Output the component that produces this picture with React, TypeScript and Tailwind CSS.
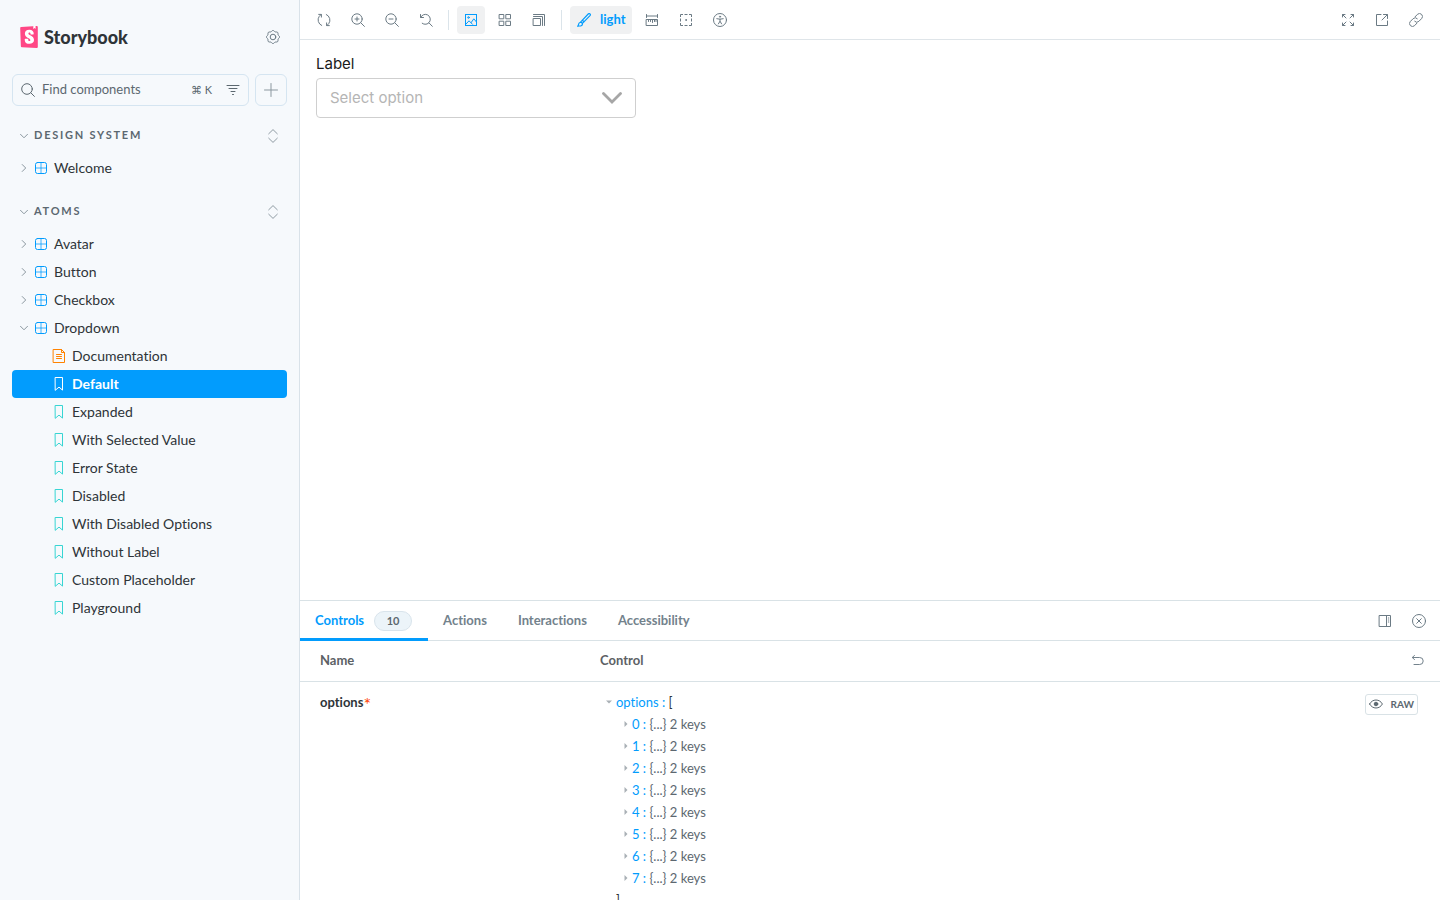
import React, { useState } from "react";

type IconProps = { className?: string };

function Glyph({ className = "size-3.5", children }: { className?: string; children: React.ReactNode }) {
  return (
    <svg viewBox="0 0 14 14" fill="none" stroke="currentColor" strokeLinecap="round" className={`shrink-0 ${className}`} aria-hidden="true">
      {children}
    </svg>
  );
}

const Logo = () => (
  <svg viewBox="0 0 32 40" className="h-[22px] w-[18px] shrink-0" aria-hidden="true">
    <path fill="#FF4785" d="M1.2 36.9 0 3.9c0-1.1.8-2 1.9-2.1l28-1.8a2 2 0 0 1 2.1 1.9V38a2 2 0 0 1-2 2L3.3 38.8a2 2 0 0 1-2.1-1.9z" />
    <path fill="#fff" d="M23.7 5 24 .2l3.9-.3.1 4.8a.3.3 0 0 1-.5.2L26 3.8l-1.7 1.4a.3.3 0 0 1-.5-.3zm-5 10c0 .9 5.3.5 6 0 0-5.400-2.800-8.200-8-8.200-5.300 0-8.200 2.800-8.200 7.100 0 7.400 10 7.600 10 11.600 0 1.200-.5 1.900-1.800 1.900-1.600 0-2.200-.9-2.100-3.600 0-.6-6.100-.8-6.300 0-.5 6.700 3.700 8.600 8.500 8.600 4.600 0 8.300-2.500 8.300-7 0-7.900-10.200-7.700-10.200-11.600 0-1.600 1.200-1.800 2-1.800.6 0 2 0 1.800 3z" />
  </svg>
);

// Outline of an eight-lobed gear, sampled around the centre.
const gearPoints = Array.from({ length: 64 }, (_, i) => {
  const angle = (i / 64) * Math.PI * 2;
  const radius = 6.05 + 0.5 * Math.cos(8 * angle);
  return `${(7 + radius * Math.cos(angle)).toFixed(2)},${(7 + radius * Math.sin(angle)).toFixed(2)}`;
}).join(" ");

const CogIcon = () => (
  <Glyph>
    <circle cx="7" cy="7" r="2.8" />
    <polygon points={gearPoints} strokeLinejoin="round" />
  </Glyph>
);
const SearchIcon = () => (
  <Glyph>
    <circle cx="6" cy="6" r="5.3" />
    <path d="m9.9 9.9 3.500 3.500" />
  </Glyph>
);
const FilterIcon = () => (
  <Glyph>
    <path d="M1 2.500h12M3 5.500h8M5 8.500h4M6.500 11.500h1" />
  </Glyph>
);
const PlusIcon = () => (
  <Glyph>
    <path d="M7 .5v13M.5 7h13" />
  </Glyph>
);
const ExpandAllIcon = () => (
  <Glyph>
    <path strokeLinejoin="round" d="M2.700 4.800 7 .6l4.300 4.200M2.700 9.200 7 13.400l4.300-4.200" />
  </Glyph>
);
const Chevron = ({ open }: { open: boolean }) => (
  <svg viewBox="0 0 8 8" fill="none" stroke="currentColor" strokeLinecap="round" strokeLinejoin="round" className="size-2 shrink-0 text-[#8b979f]" aria-hidden="true">
    <path d={open ? "M.5 2.300 4 5.800l3.500-3.500" : "M2.200.5 5.700 4 2.200 7.500"} />
  </svg>
);
const ComponentIcon = () => (
  <Glyph className="size-3.5 text-[#029cfd]">
    <rect x="1.5" y="1.5" width="11" height="11" rx="2" />
    <path d="M7 1.500v11M1.500 7h11" strokeOpacity=".75" />
  </Glyph>
);
const DocumentIcon = () => (
  <Glyph className="size-3.5 text-[#ff8300]">
    <path d="M1.500.5h8l3 3v10h-11z" />
    <path d="M9.500.5v3h3M4.500 5.500h5M4.500 7.500h5M4.500 9.500h5" />
  </Glyph>
);
const BookmarkIcon = ({ className }: IconProps) => (
  <Glyph className={`size-3.5 ${className}`}>
    <path d="M3.500.5h7v12.600L7 10.100l-3.500 3z" strokeLinejoin="round" />
  </Glyph>
);

const SyncIcon = () => (
  <Glyph>
    <path d="M4.700 12.500A6 6 0 0 1 2.300 3.300L4.200 1.400M1.700 1.400h2.700v2.700M9.300 1.500a6 6 0 0 1 2.400 9.200l-1.900 1.900M12.300 12.600H9.600V9.900" />
  </Glyph>
);
const ZoomInIcon = () => (
  <Glyph>
    <circle cx="6" cy="6" r="5.2" />
    <path d="m9.800 9.800 3.600 3.600M6 4v4M4 6h4" />
  </Glyph>
);
const ZoomOutIcon = () => (
  <Glyph>
    <circle cx="6" cy="6" r="5.2" />
    <path d="m9.800 9.800 3.600 3.600M4 6h4" />
  </Glyph>
);
const ZoomResetIcon = () => (
  <Glyph>
    <path d="M1.500 1.500v3h3M1.700 4.300A5 5 0 1 1 3.200 10.300M9.800 9.700l3.500 3.600" />
  </Glyph>
);
const PhotoIcon = () => (
  <Glyph>
    <rect x="1.5" y="1.5" width="11" height="11" />
    <circle cx="4.5" cy="4.5" r=".8" />
    <path d="m1.800 11.300 3.200-3.500 2 2 2.800-4 2.500 3M7 9.800l1.500 1.500" />
  </Glyph>
);
const GridIcon = () => (
  <Glyph>
    <path d="M1.500 1.500h4.300v4.300H1.500zM8.200 1.500h4.300v4.300H8.200zM1.500 8.200h4.300v4.300H1.500zM8.200 8.200h4.300v4.300H8.200z" />
  </Glyph>
);
const GrowIcon = () => (
  <Glyph>
    <path d="M1.500 5.500h7v7h-7zM1.500 3.500h9v9M1.500 1.500h11v11" />
  </Glyph>
);
const PaintBrushIcon = () => (
  <Glyph>
    <path strokeWidth="1.2" strokeLinejoin="round" d="M.7 13.300c.8-.7.7-1.900 1.300-3 .7-1.300 2.300-1.300 3-.4.800 1 .4 2.300-.8 2.800-1 .4-2.300.2-3.500.6zM3.300 9.300l7.900-8.300c.6-.6 1.300-.5 1.800-.1.500.5.500 1.200 0 1.800L5.200 10.600M5.300 7.200l1.700 1.600" />
  </Glyph>
);
const RulerIcon = () => (
  <Glyph>
    <path d="M1.500 1.500v3M12.500 1.500v3M1.500 3h11M1.500 6.500h11v6h-11zM3.500 6.500v2M5.500 6.500v2M7.500 6.500v3M9.500 6.500v2M11 6.500v2" />
  </Glyph>
);
const OutlineIcon = () => (
  <Glyph>
    <path d="M1.500 4V1.500H4M5.500 1.500h3M10 1.500h2.500V4M12.500 5.500v3M12.500 10v2.500H10M8.500 12.500h-3M4 12.500H1.500V10M1.500 8.500v-3" strokeLinecap="butt" />
    <circle cx="7" cy="7" r=".5" />
  </Glyph>
);
const AccessibilityIcon = () => (
  <Glyph>
    <circle cx="7" cy="7" r="6.5" />
    <circle cx="7" cy="3.7" r=".6" />
    <path strokeLinejoin="round" d="M3.800 5.700 7 6.200l3.200-.5M7 6.200v2M5.400 10.900 7 8.200l1.600 2.700" />
  </Glyph>
);
const FullscreenIcon = () => (
  <Glyph>
    <path d="M1.500 4V1.500H4M1.500 1.500 5 5M10 1.500h2.500V4M12.500 1.500 9 5M1.500 10v2.500H4M1.500 12.500 5 9M12.500 10v2.500H10M12.500 12.500 9 9" />
  </Glyph>
);
const ShareIcon = () => (
  <Glyph>
    <path strokeLinejoin="round" d="M6 1.500H1.500v11h11V8M8.500 1.500h4v4M12.300 1.700 7 7" />
  </Glyph>
);
const LinkIcon = () => (
  <Glyph>
    <path d="m6.200 3.700 2.200-2.300a2.900 2.900 0 0 1 4.200 4.200L9.900 8.300a2.900 2.900 0 0 1-4.200 0M7.800 10.300l-2.200 2.300a2.900 2.900 0 0 1-4.200-4.200l2.700-2.700a2.900 2.900 0 0 1 4.200 0" />
  </Glyph>
);
const SidebarRightIcon = () => (
  <Glyph>
    <path d="M1.500 1.500h11v11h-11zM8.500 1.500v11M10.300 4h.5M10.300 6h.5M10.300 8h.5" />
  </Glyph>
);
const CloseIcon = () => (
  <Glyph>
    <circle cx="7" cy="7" r="6.5" />
    <path d="m4.700 4.700 4.600 4.600M9.300 4.700 4.700 9.300" />
  </Glyph>
);
const UndoIcon = () => (
  <Glyph>
    <path d="M3.500 1.500 1.200 3.500l2.300 2M1.500 3.500h7.200a3.500 3.500 0 0 1 0 7H3" strokeLinejoin="round" />
  </Glyph>
);
const EyeIcon = () => (
  <Glyph>
    <path d="M.6 7C2 4.500 4.300 3 7 3s5 1.500 6.400 4C12 9.500 9.700 11 7 11S2 9.500.6 7z" />
    <circle cx="7" cy="7" r="1.8" fill="currentColor" />
  </Glyph>
);

function ToolButton({ label, active, children }: { label: string; active?: boolean; children: React.ReactNode }) {
  return (
    <button
      type="button"
      aria-label={label}
      className={`flex size-7 shrink-0 items-center justify-center rounded ${active ? "bg-[#f0f1f2] text-[#029cfd]" : "text-[#6b7a84]"}`}
    >
      {children}
    </button>
  );
}

const ToolDivider = () => <span className="mx-0.5 h-5 w-px bg-[#dbe4ea]" />;

function SectionHeading({ title }: { title: string }) {
  return (
    <div className="mb-1 flex h-[29px] items-center justify-between pr-[7px] pl-2 text-[#5c6870]">
      <button type="button" className="flex items-center gap-1.5 text-[11px] font-bold tracking-[0.16em] uppercase">
        <Chevron open />
        {title}
      </button>
      <button type="button" aria-label={`Expand ${title}`} className="text-[#8f9ba3]">
        <ExpandAllIcon />
      </button>
    </div>
  );
}

function ComponentRow({ name, open = false }: { name: string; open?: boolean }) {
  return (
    <button type="button" aria-expanded={open} className="flex h-7 w-full items-center gap-1.5 rounded px-2 text-left text-sm">
      <Chevron open={open} />
      <ComponentIcon />
      {name}
    </button>
  );
}

const stories = [
  "Default",
  "Expanded",
  "With Selected Value",
  "Error State",
  "Disabled",
  "With Disabled Options",
  "Without Label",
  "Custom Placeholder",
  "Playground",
];

function Sidebar() {
  return (
    <aside className="flex w-[300px] shrink-0 flex-col border-r border-[#d9e2e9] bg-[#f6f9fc] px-3 text-[#2e3438]">
      <header className="flex h-[74px] items-center justify-between pr-[7px] pl-2">
        <a href="#home" className="flex items-center gap-1.5 text-lg font-black">
          <Logo />
          Storybook
        </a>
        <button type="button" aria-label="Settings" className="text-[#6b7a84]">
          <CogIcon />
        </button>
      </header>
      <div className="mb-[15px] flex gap-1.5">
        <div className="flex h-8 min-w-0 flex-1 items-center rounded-md border border-[#d5e5f1] px-2 text-[#5c6870]">
          <SearchIcon />
          <input
            type="text"
            aria-label="Find components"
            placeholder="Find components"
            className="ml-[7px] min-w-0 flex-1 bg-transparent text-[13px] outline-none placeholder:text-[#5c6870]"
          />
          <kbd className="mr-3.5 font-[Lato,'DejaVu_Sans',sans-serif] text-[11px]">⌘ K</kbd>
          <button type="button" aria-label="Filter">
            <FilterIcon />
          </button>
        </div>
        <button type="button" aria-label="Create a new story" className="flex size-8 items-center justify-center rounded-md border border-[#d5e5f1] text-[#8b979f]">
          <PlusIcon />
        </button>
      </div>
      <section className="mb-[15px]">
        <SectionHeading title="Design System" />
        <ComponentRow name="Welcome" />
      </section>
      <section>
        <SectionHeading title="Atoms" />
        <ComponentRow name="Avatar" />
        <ComponentRow name="Button" />
        <ComponentRow name="Checkbox" />
        <ComponentRow name="Dropdown" open />
        <a href="#docs" className="flex h-7 items-center gap-1.5 rounded pl-10 text-sm">
          <DocumentIcon />
          Documentation
        </a>
        {stories.map((story, i) => (
          <a
            key={story}
            href={`#story-${i}`}
            className={`flex h-7 items-center gap-1.5 rounded pl-10 text-sm ${i === 0 ? "bg-[#029cfd] font-bold text-white" : ""}`}
          >
            <BookmarkIcon className={i === 0 ? "text-white" : "text-[#37d5d3]"} />
            {story}
          </a>
        ))}
      </section>
    </aside>
  );
}

function Toolbar() {
  return (
    <div className="flex h-10 shrink-0 items-center justify-between border-b border-[#dfe5e9] px-2.5">
      <div className="flex items-center gap-1.5">
        <ToolButton label="Reload story"><SyncIcon /></ToolButton>
        <ToolButton label="Zoom in"><ZoomInIcon /></ToolButton>
        <ToolButton label="Zoom out"><ZoomOutIcon /></ToolButton>
        <ToolButton label="Reset zoom"><ZoomResetIcon /></ToolButton>
        <ToolDivider />
        <ToolButton label="Change background" active><PhotoIcon /></ToolButton>
        <ToolButton label="Toggle grid"><GridIcon /></ToolButton>
        <ToolButton label="Change viewport"><GrowIcon /></ToolButton>
        <ToolDivider />
        <button type="button" className="flex h-7 items-center gap-[9px] rounded bg-[#f0f1f2] px-[7px] text-[13px] font-bold text-[#029cfd]">
          <PaintBrushIcon />
          light
        </button>
        <ToolButton label="Measure"><RulerIcon /></ToolButton>
        <ToolButton label="Outline"><OutlineIcon /></ToolButton>
        <ToolButton label="Vision simulator"><AccessibilityIcon /></ToolButton>
      </div>
      <div className="flex items-center gap-1.5">
        <ToolButton label="Full screen"><FullscreenIcon /></ToolButton>
        <ToolButton label="Open in new tab"><ShareIcon /></ToolButton>
        <ToolButton label="Copy link"><LinkIcon /></ToolButton>
      </div>
    </div>
  );
}

function Canvas() {
  return (
    <main className="min-h-0 flex-1 px-4 py-3.5 font-[Inter,sans-serif]">
      <label htmlFor="dropdown" className="mb-1 block text-[15px] leading-5 text-[#1a1a1a]">
        Label
      </label>
      <div className="relative w-80">
        <select id="dropdown" defaultValue="" className="h-10 w-full appearance-none rounded border border-[#cfcfcf] bg-white px-[13px] text-[15px] text-[#b5b5b5]">
          <option value="">Select option</option>
        </select>
        <svg viewBox="0 0 20 12" fill="none" stroke="#a6a6a6" strokeWidth="2.8" className="pointer-events-none absolute top-3.5 right-3.5 h-3 w-5" aria-hidden="true">
          <path d="m1.500 1.500 8.500 8.500 8.500-8.500" strokeLinecap="round" />
        </svg>
      </div>
    </main>
  );
}

const tabs = ["Controls", "Actions", "Interactions", "Accessibility"];

function AddonPanel() {
  const [tab, setTab] = useState("Controls");
  return (
    <section className="flex h-[300px] shrink-0 flex-col overflow-hidden border-t border-[#d9e2e6]">
      <div className="flex h-10 shrink-0 items-stretch justify-between border-b border-[#d9e2e6] pr-[7px]">
        <div role="tablist" className="-mb-px flex">
          {tabs.map((name) => (
            <button
              key={name}
              type="button"
              role="tab"
              aria-selected={tab === name}
              onClick={() => setTab(name)}
              className={`flex items-center gap-2.5 border-y-3 border-t-transparent pr-4 pl-[15px] text-[13px] font-bold ${tab === name ? "border-b-[#029cfd] text-[#029cfd]" : "border-b-transparent text-[#73828c]"}`}
            >
              {name}
              {name === "Controls" && (
                <span className="flex h-5 w-[38px] items-center justify-center rounded-full border border-[#d9e4ec] bg-[#ecf4f9] text-[11px] text-[#5c6870]">10</span>
              )}
            </button>
          ))}
        </div>
        <div className="flex items-center gap-1.5">
          <ToolButton label="Change orientation"><SidebarRightIcon /></ToolButton>
          <ToolButton label="Hide panel"><CloseIcon /></ToolButton>
        </div>
      </div>
      <table className="w-full table-fixed text-left text-[13px]">
        <thead>
          <tr className="h-10 border-b border-[#d9e2e6] text-[#5c6165]">
            <th scope="col" className="w-[280px] pl-5 font-bold">Name</th>
            <th scope="col" className="pr-[15px] pl-5">
              <div className="flex items-center justify-between font-bold">
                Control
                <button type="button" aria-label="Reset controls" className="text-[#73828c]"><UndoIcon /></button>
              </div>
            </th>
          </tr>
        </thead>
        <tbody>
          <tr className="align-top">
            <td className="pt-2.5 pl-5 leading-5 font-bold text-[#2e3438]">
              options<span className="align-[-4px] text-lg leading-none font-normal text-[#ff4400]">*</span>
            </td>
            <td className="pt-[9px] pr-[22px] pl-5">
              <div className="flex items-start justify-between leading-[22px] text-[#5c6870]">
                <div className="pl-1.5">
                  <div className="flex items-center gap-1">
                    <svg viewBox="0 0 6 4" className="h-1 w-1.5" fill="#a9b0b5" aria-hidden="true"><path d="M0 .5h6l-3 3z" /></svg>
                    <span><span className="text-[#029cfd]">options :</span> <span className="text-[#2e3438]">[</span></span>
                  </div>
                  <ul className="pl-[18px]">
                    {[0, 1, 2, 3, 4, 5, 6, 7].map((i) => (
                      <li key={i} className="flex items-center gap-1">
                        <svg viewBox="0 0 4 6" className="h-1.5 w-1" fill="#a9b0b5" aria-hidden="true"><path d="M.5 0v6l3-3z" /></svg>
                        <span><span className="text-[#029cfd]">{i} :</span> {"{...}"} 2 keys</span>
                      </li>
                    ))}
                  </ul>
                  <div className="pl-2.5 text-[#2e3438]">]</div>
                </div>
                <button type="button" className="mt-[3px] flex h-[21px] items-center gap-2 rounded-[3px] border border-[#d9e2e6] px-[3px] text-[10px] font-bold">
                  <EyeIcon />
                  RAW
                </button>
              </div>
            </td>
          </tr>
        </tbody>
      </table>
    </section>
  );
}

export default function App() {
  return (
    <div className="flex h-screen overflow-hidden bg-white font-[Lato,sans-serif] [font-variant-ligatures:no-common-ligatures]">
      <Sidebar />
      <div className="flex min-w-0 flex-1 flex-col">
        <Toolbar />
        <Canvas />
        <AddonPanel />
      </div>
    </div>
  );
}
